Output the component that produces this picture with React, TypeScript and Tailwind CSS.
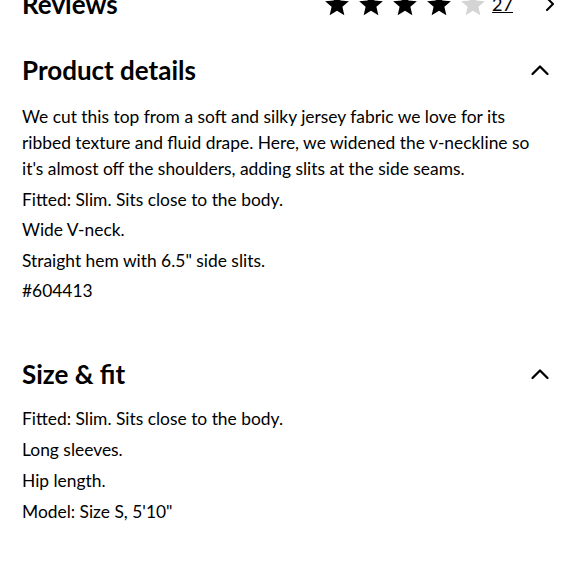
import React from "react";

const Star = ({ filled }: { filled: boolean }) => (
  <svg width="26" height="26" viewBox="0 0 24 24" className={filled ? "fill-black" : "fill-[#d4d4d4]"}>
    <path d="M12 1.5l3.09 7.26 7.86.68-5.96 5.17 1.79 7.69L12 18.2l-6.78 4.1 1.79-7.69L1.05 9.44l7.86-.68z" />
  </svg>
);

const ChevronUp = () => (
  <svg width="20" height="20" viewBox="0 0 20 20" fill="none" stroke="black" strokeWidth="2.3" strokeLinecap="round" strokeLinejoin="round">
    <path d="M2.5 14l7.5-7.5 7.5 7.5" />
  </svg>
);

const ChevronRight = () => (
  <svg width="18" height="18" viewBox="0 0 18 18" fill="none" stroke="black" strokeWidth="2" strokeLinecap="round" strokeLinejoin="round">
    <path d="M6 3l6 6-6 6" />
  </svg>
);

export default function App() {
  const font = { fontFamily: "Lato, 'Open Sans', sans-serif" };
  return (
    <div className="w-[580px] h-[580px] overflow-hidden bg-white text-black" style={font}>
      <div className="px-[22px]">
        <div className="flex items-center justify-between -mt-[13px] h-[34px]">
          <h2 className="text-[26px] font-bold">Reviews</h2>
          <div className="flex items-center">
            <div className="flex gap-[8px]">
              <Star filled />
              <Star filled />
              <Star filled />
              <Star filled />
              <Star filled={false} />
            </div>
            <span className="ml-[6px] text-[18px] underline">27</span>
            <span className="ml-[28px] mr-[-1px]"><ChevronRight /></span>
          </div>
        </div>

        <div className="flex items-center justify-between mt-[33px] h-[32px]">
          <h2 className="text-[26px] font-bold">Product details</h2>
          <span className="mr-[8px]"><ChevronUp /></span>
        </div>
        <div className="mt-[18px] text-[17.4px] leading-[26px] flex flex-col gap-[4.5px] w-[512px]">
          <p>We cut this top from a soft and silky jersey fabric we love for its ribbed texture and fluid drape. Here, we widened the v-neckline so it's almost off the shoulders, adding slits at the side seams.</p>
          <p>Fitted: Slim. Sits close to the body.</p>
          <p>Wide V-neck.</p>
          <p>Straight hem with 6.5" side slits.</p>
          <p>#604413</p>
        </div>

        <div className="flex items-center justify-between mt-[54px] h-[32px]">
          <h2 className="text-[26px] font-bold">Size &amp; fit</h2>
          <span className="mr-[8px]"><ChevronUp /></span>
        </div>
        <div className="mt-[16px] text-[17.4px] leading-[26px] flex flex-col gap-[5px]">
          <p>Fitted: Slim. Sits close to the body.</p>
          <p>Long sleeves.</p>
          <p>Hip length.</p>
          <p>Model: Size S, 5'10"</p>
        </div>
      </div>
    </div>
  );
}
